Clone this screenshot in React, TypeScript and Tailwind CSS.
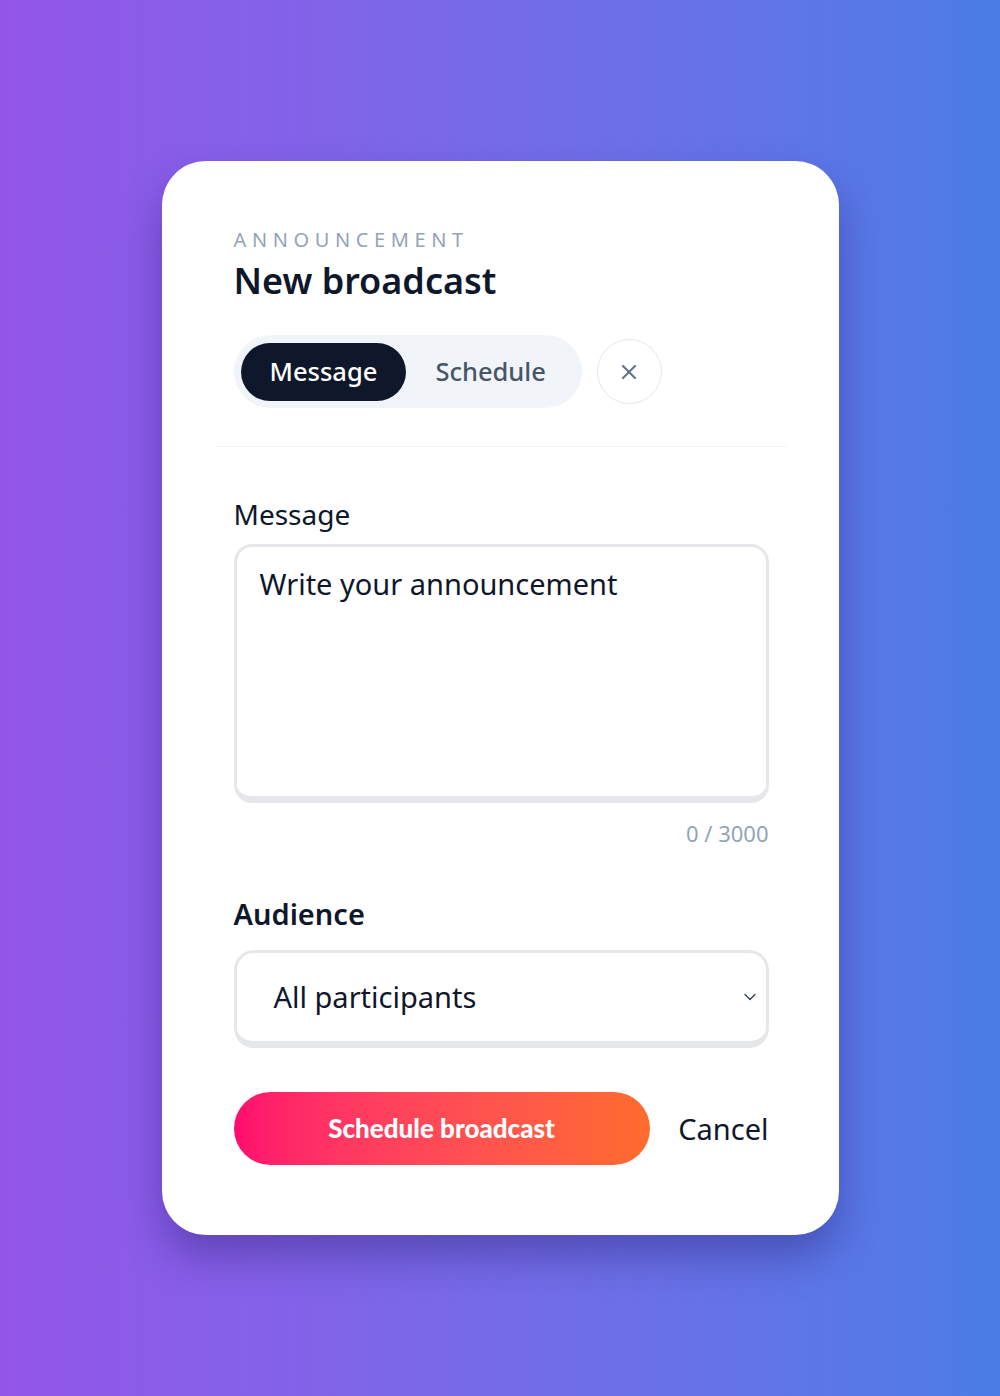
import React, { useState } from 'react';
import { X, ChevronDown } from 'lucide-react';

const tabs = ['Message', 'Schedule'];

export default function App() {
  const [active, setActive] = useState('Message');
  const [text, setText] = useState('Write your announcement');

  return (
    <div
      className="flex h-screen min-h-[1396px] w-full items-center justify-center bg-linear-to-r from-[#9355e9] to-[#4a7ce6]"
      style={{ fontFamily: '"Noto Sans", "Open Sans", sans-serif' }}
    >
      <div className="flex w-[677px] flex-col rounded-[44px] bg-white pb-[70px] pl-[72px] pr-[70px] pt-[65px] shadow-[0_22px_40px_rgba(35,25,110,0.38)]">
        {/* Header */}
        <div className="text-[20px] leading-[28px] tracking-[0.28em] text-[#94a3b8]">ANNOUNCEMENT</div>
        <h1 className="mt-[7px] text-[36px] font-semibold leading-[40px] text-[#0f172a]">New broadcast</h1>

        {/* Tabs */}
        <div className="mt-[34px] flex items-center gap-[15px]">
          <div className="flex h-[73px] items-center rounded-full bg-[#f1f5f9] px-[7px]">
            {tabs.map((t) => (
              <button
                key={t}
                onClick={() => setActive(t)}
                className={`flex h-[58px] items-center rounded-full px-[29px] text-[25.5px] font-medium ${
                  active === t ? 'bg-[#0f172a] text-white' : 'text-[#475569]'
                }`}
              >
                {t}
              </button>
            ))}
          </div>
          <button className="flex h-[65px] w-[65px] items-center justify-center rounded-full border border-[#e2e8f0] text-[#64748b]">
            <X size={24} strokeWidth={2.2} />
          </button>
        </div>

        <div className="-ml-[19px] -mr-[18px] mt-[38px] h-px bg-[#eef2f6]" />

        {/* Message */}
        <label className="mt-[49px] text-[28px] leading-[36px] text-[#0f172a]">Message</label>
        <textarea
          value={text}
          onChange={(e) => setText(e.target.value)}
          className="mt-[12px] h-[259px] w-full resize-none rounded-[18px] border-[3px] border-b-[7px] border-[#e5e7eb] px-[23px] py-[18px] text-[29px] leading-[38px] text-[#0f172a] outline-none"
        />
        <div className="mt-[16px] text-right text-[22px] leading-[28px] text-[#94a3b8]">0 / 3000</div>

        {/* Audience */}
        <label className="mt-[49px] text-[29px] font-semibold leading-[36px] text-[#0f172a]">Audience</label>
        <div className="mt-[18px] flex h-[98px] w-full items-center justify-between rounded-[20px] border-[3px] border-b-[7px] border-[#e5e7eb] pl-[37px] pr-[6px]">
          <span className="text-[29px] text-[#0f172a]">All participants</span>
          <ChevronDown size={20} strokeWidth={1.6} className="text-[#334155]" />
        </div>

        {/* Actions */}
        <div className="mt-[44px] flex items-center justify-between">
          <button
            className="flex h-[73px] w-[416px] items-center justify-center rounded-full bg-linear-to-r from-[#ff0a6e] to-[#ff6b2c] text-[26px] font-black text-white"
            style={{ fontFamily: 'Lato, "Noto Sans", sans-serif' }}
          >
            Schedule broadcast
          </button>
          <button className="text-[29px] text-[#0f172a]">Cancel</button>
        </div>
      </div>
    </div>
  );
}
